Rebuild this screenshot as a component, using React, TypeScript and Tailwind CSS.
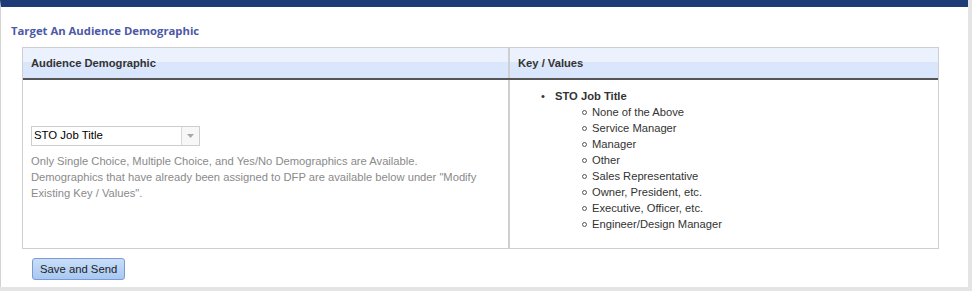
import React from "react";

const items = [
  "None of the Above",
  "Service Manager",
  "Manager",
  "Other",
  "Sales Representative",
  "Owner, President, etc.",
  "Executive, Officer, etc.",
  "Engineer/Design Manager",
];

export default function App() {
  return (
    <div className="w-[972px] h-[291px] bg-[#e4e4e4] overflow-hidden" style={{ fontFamily: "Arial, 'Liberation Sans', sans-serif" }}>
      <div className="w-[968px] h-[287px] bg-white border-l border-[#d3d3d3] border-t-[7px] border-t-[#1f3b77] flex flex-col">
        <div className="pl-[10px] pt-[16px] h-[40px] text-[11.3px] font-bold text-[#4d58a8] leading-[16px]" style={{ fontFamily: "'Open Sans', sans-serif" }}>
          Target An Audience Demographic
        </div>
        <div className="ml-[21px] w-[917px] border border-[#cfcfcf] text-[11.2px] text-[#333]">
          <div className="grid grid-cols-[485px_1fr] h-[32px] border-b-2 border-b-[#555] bg-[linear-gradient(#ecf2fd_0%,#ecf2fd_45%,#dae6fb_45%,#dae6fb_100%)]">
            <div className="pl-[8px] flex items-center font-bold text-[#333] pt-[1px]">Audience Demographic</div>
            <div className="pl-[8px] flex items-center font-bold text-[#333] border-l-2 border-[#cfcfcf] pt-[1px]">Key / Values</div>
          </div>
          <div className="grid grid-cols-[485px_1fr] h-[168px]">
            <div className="pl-[8px] pt-[46px]">
              <div className="w-[169px] h-[20px] border border-[#cdcdcd] flex items-stretch bg-white">
                <div className="flex-1 pl-[2px] flex items-center text-[11.4px] text-black">STO Job Title</div>
                <div className="w-[18px] border-l border-[#d8d8d8] flex items-center justify-center bg-[#f7f7f7]">
                  <svg width="7" height="4" viewBox="0 0 7 4"><path d="M0 0 L7 0 L3.5 4 Z" fill="#a9a9a9" /></svg>
                </div>
              </div>
              <div className="mt-[7px] leading-[16px] text-[#8a8a8a] w-[460px]">
                Only Single Choice, Multiple Choice, and Yes/No Demographics are Available.
                <br />
                Demographics that have already been assigned to DFP are available below under "Modify Existing Key / Values".
              </div>
            </div>
            <div className="border-l-2 border-[#cfcfcf] pt-[8px] pl-[31px] leading-[16px] text-[#333]">
              <div className="flex">
                <span className="w-[14px]">•</span>
                <div>
                  <div className="font-bold">STO Job Title</div>
                  <div className="ml-[26px]">
                    {items.map((t) => (
                      <div key={t} className="flex items-center">
                        <span className="w-[11px] flex items-center pl-[1px]">
                          <span className="w-[5px] h-[5px] rounded-full border border-[#555]" />
                        </span>
                        <span>{t}</span>
                      </div>
                    ))}
                  </div>
                </div>
              </div>
            </div>
          </div>
        </div>
        <div className="pl-[31px] pt-[7px]">
          <button className="h-[22px] px-[7px] rounded-[3px] border border-[#7a9ccf] bg-[linear-gradient(#c9defa,#a8c8f2)] text-[11.3px] text-[#222] leading-[18px]">
            Save and Send
          </button>
        </div>
      </div>
    </div>
  );
}
